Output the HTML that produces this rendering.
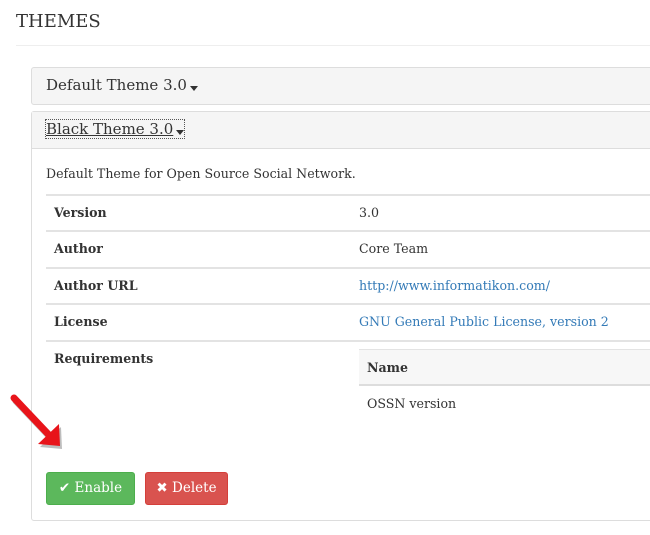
<!DOCTYPE html>
<html><head><meta charset="utf-8"><style>
*{margin:0;padding:0;box-sizing:border-box}
body{width:650px;height:535px;background:#fff;position:relative;overflow:hidden;font-family:"DejaVu Serif","Liberation Serif",serif;color:#333;font-size:12.6px}
.a{position:absolute;white-space:nowrap}
.line{position:absolute;height:2px;background:#e3e3e3}
.b{font-weight:bold}
.lnk{color:#337ab7}
.caret{display:inline-block;width:0;height:0;border-left:4px solid transparent;border-right:4px solid transparent;border-top:5px solid #333;margin-left:3px;vertical-align:-1px}
.btn{position:absolute;height:33px;border-radius:3px;color:#fff;font-size:13.5px;line-height:31px;text-align:center}
</style></head><body>
<div class="a" style="left:16px;top:11px;font-size:18px;color:#333">THEMES</div>
<div class="line" style="left:16px;top:45px;width:634px;height:1px;background:#eee"></div>

<div class="a" style="left:31px;top:67px;width:630px;height:38px;background:#f5f5f5;border:1px solid #ddd;border-radius:3px"></div>
<div class="a" style="left:46px;top:76px;font-size:15px">Default Theme 3.0<span class="caret"></span></div>

<div class="a" style="left:31px;top:111px;width:630px;height:410px;border:1px solid #ddd;border-radius:3px"></div>
<div class="a" style="left:32px;top:112px;width:628px;height:37px;background:#f5f5f5;border-bottom:1px solid #ddd"></div>
<div class="a" style="left:46px;top:120px;font-size:15px;text-decoration:underline;outline:1px dotted #555">Black Theme 3.0<span class="caret"></span></div>

<div class="a" style="left:46px;top:166px">Default Theme for Open Source Social Network.</div>
<div class="line" style="left:46px;top:194px;width:604px"></div>
<div class="a b" style="left:54px;top:205px">Version</div><div class="a" style="left:359px;top:205px">3.0</div>
<div class="line" style="left:46px;top:230px;width:604px"></div>
<div class="a b" style="left:54px;top:241px">Author</div><div class="a" style="left:359px;top:241px">Core Team</div>
<div class="line" style="left:46px;top:267px;width:604px"></div>
<div class="a b" style="left:54px;top:278px">Author URL</div><div class="a lnk" style="left:359px;top:278px">http://www.informatikon.com/</div>
<div class="line" style="left:46px;top:303px;width:604px"></div>
<div class="a b" style="left:54px;top:314px">License</div><div class="a lnk" style="left:359px;top:314px">GNU General Public License, version 2</div>
<div class="line" style="left:46px;top:340px;width:604px"></div>
<div class="a b" style="left:54px;top:351px">Requirements</div>
<div class="a" style="left:359px;top:349px;width:291px;height:37px;background:#f7f7f7;border-top:1px solid #e3e3e3;border-bottom:2px solid #ddd"></div>
<div class="a b" style="left:367px;top:360px">Name</div>
<div class="a" style="left:367px;top:396px">OSSN version</div>

<svg class="a" style="left:5px;top:390px" width="62" height="64" viewBox="0 0 62 64">
<g transform="translate(2,3)" opacity=".35"><line x1="9" y1="8" x2="44" y2="45" stroke="#444" stroke-width="7" stroke-linecap="round"/><polygon points="33,54 55,56 54,34" fill="#444"/></g>
<line x1="9" y1="8" x2="44" y2="45" stroke="#e8141a" stroke-width="7" stroke-linecap="round"/>
<polygon points="33,54 55,56 54,34" fill="#e8141a"/>
</svg>

<div class="btn" style="left:46px;top:472px;width:89px;background:#5cb85c;border:1px solid #4cae4c">✔ Enable</div>
<div class="btn" style="left:145px;top:472px;width:83px;background:#d9534f;border:1px solid #d43f3a">✖ Delete</div>
</body></html>
